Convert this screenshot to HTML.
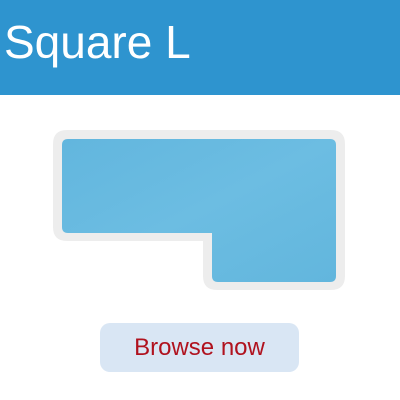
<!DOCTYPE html>
<html><head><meta charset="utf-8"><style>
html,body{margin:0;padding:0;width:400px;height:400px;background:#fff;overflow:hidden}
.hd{position:absolute;left:0;top:0;width:400px;height:95px;background:#2e94cf}
.hd span{position:absolute;left:4px;top:19px;font:46px/1 "Liberation Sans",sans-serif;color:#fff;white-space:nowrap}
svg{position:absolute;left:0;top:0}
.btn{position:absolute;left:100px;top:323px;width:199px;height:49px;background:#d9e6f4;border-radius:10px;text-align:center;font:24px/49px "Liberation Sans",sans-serif;color:#b0121e}
</style></head><body>
<div class="hd"><span>Square L</span></div>
<svg width="400" height="400">
<defs><linearGradient id="g" x1="0" y1="0" x2="1" y2="1"><stop offset="0" stop-color="#62b6de"/><stop offset=".5" stop-color="#6cbde2"/><stop offset="1" stop-color="#62b6dd"/></linearGradient></defs>
<path d="M67 130 H331 Q345 130 345 144 V276 Q345 290 331 290 H217 Q203 290 203 276 V241 H67 Q53 241 53 227 V144 Q53 130 67 130 Z" fill="#ededed"/>
<path d="M68 139 H330 Q336 139 336 145 V276 Q336 282 330 282 H218 Q212 282 212 276 V233 H68 Q62 233 62 227 V145 Q62 139 68 139 Z" fill="url(#g)"/>
</svg>
<div class="btn">Browse now</div>
</body></html>
